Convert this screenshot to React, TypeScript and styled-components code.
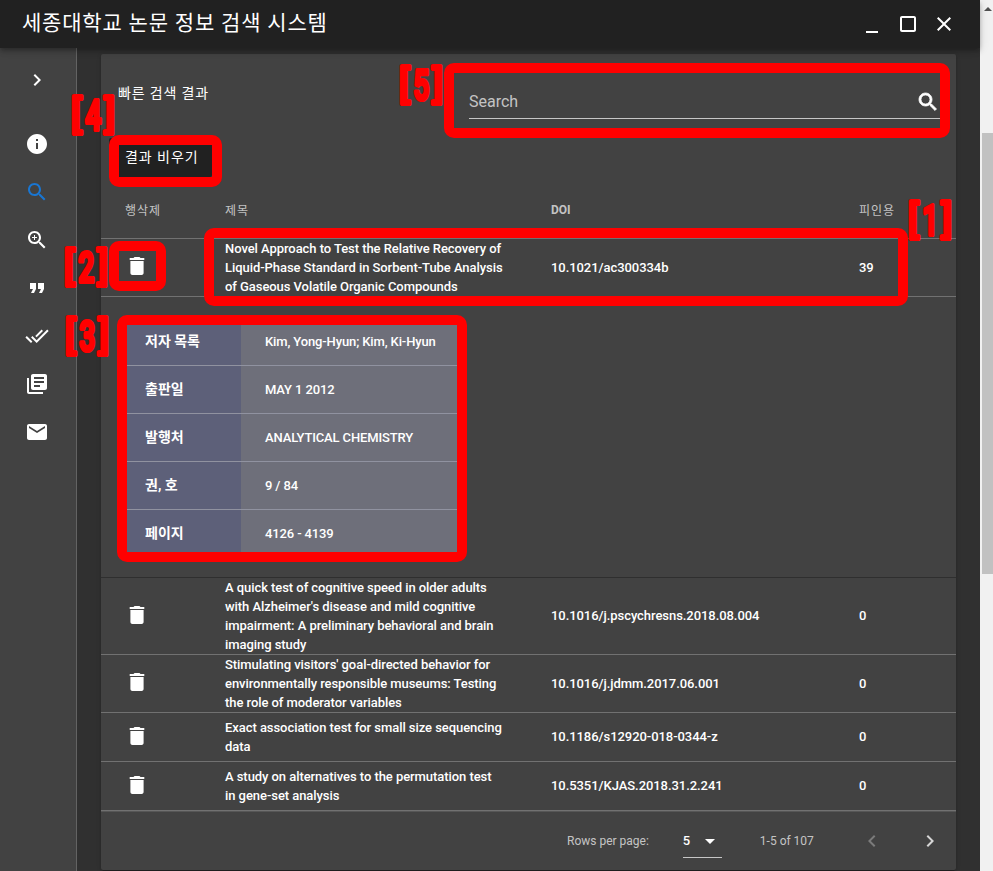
import React from "react";
import styled, { createGlobalStyle, css } from "styled-components";

const GlobalStyle = createGlobalStyle`
  *, *::before, *::after { box-sizing: border-box; }
  body {
    margin: 0;
    overflow: hidden;
    background: #303030;
    color: #fff;
    font-family: Roboto, "Noto Sans CJK KR", sans-serif;
  }
`;

const Screen = styled.div`
  position: relative;
  display: flex;
  width: 993px;
  height: 871px;
  overflow: hidden;
`;

const Window = styled.div`
  display: flex;
  flex-direction: column;
  width: 980px;
`;

const TitleBar = styled.header`
  display: flex;
  align-items: center;
  justify-content: space-between;
  flex: none;
  height: 48px;
  padding: 0 24px 0 22px;
  background: #212121;
  box-shadow: 0 2px 4px -1px rgba(0, 0, 0, 0.2), 0 4px 5px rgba(0, 0, 0, 0.14),
    0 1px 10px rgba(0, 0, 0, 0.12);
  z-index: 1;
`;

const AppTitle = styled.h1`
  margin: 0 0 1px;
  font-size: 21px;
  font-weight: 400;
  line-height: 1;
  letter-spacing: 0.8px;
  white-space: nowrap;
`;

const WindowButtons = styled.div`
  display: flex;
  gap: 12px;
`;

const Body = styled.div`
  display: flex;
  flex: 1;
  min-height: 0;
`;

const Sidebar = styled.nav`
  display: flex;
  flex-direction: column;
  flex: none;
  width: 77px;
  padding: 20px 0 0 25px;
  gap: 24px;
  background: #424242;
  border-right: 1px solid #636363;
`;

const NavItem = styled.a<{ $active?: boolean; $spaced?: boolean }>`
  display: flex;
  height: 24px;
  margin-bottom: ${(p) => (p.$spaced ? 16 : 0)}px;
  color: ${(p) => (p.$active ? "#1976d2" : "#fff")};
`;

const Content = styled.main`
  flex: 1;
  padding: 6px 24px 1px;
  background: #303030;
`;

const Card = styled.section`
  display: flex;
  flex-direction: column;
  height: 816px;
  background: #424242;
  border-radius: 2px;
  box-shadow: 0 3px 1px -2px rgba(0, 0, 0, 0.2), 0 2px 2px rgba(0, 0, 0, 0.14),
    0 1px 5px rgba(0, 0, 0, 0.12);
`;

const CardHead = styled.div`
  display: flex;
  justify-content: space-between;
  height: 84px;
  padding: 0 16px;
`;

const CardTitle = styled.div`
  padding: 29px 0 0 1px;
  font-size: 14px;
  line-height: 20px;
  letter-spacing: 0.85px;
`;

const SearchField = styled.label`
  display: flex;
  align-items: center;
  justify-content: space-between;
  width: 471px;
  height: 33px;
  margin-top: 32px;
  padding-bottom: 2px;
  border-bottom: 1px solid #c6c6c6;
  color: rgba(255, 255, 255, 0.7);
  font-size: 16px;
`;

const SearchIcon = styled.span`
  display: flex;
  margin-top: 2px;
  color: #fff;
  stroke: #fff;
  stroke-width: 0.8px;
`;

const ClearButton = styled.button`
  align-self: flex-start;
  height: 39px;
  margin-left: 8px;
  padding: 0 13px 0 16px;
  border: 0;
  border-radius: 2px;
  background: #212121;
  color: #fff;
  font: 400 14px/39px Roboto, "Noto Sans CJK KR", sans-serif;
  letter-spacing: 0.95px;
  white-space: nowrap;
`;

const columns = css`
  display: grid;
  grid-template-columns: 100px 326px 308px 1fr;
  align-items: center;
  padding-left: 24px;
`;

const TableHead = styled.div`
  ${columns}
  height: 62px;
  padding-top: 3px;
  border-bottom: 1px solid #717171;
  color: rgba(255, 255, 255, 0.7);
  font-size: 12px;
  font-weight: 400;
`;

const HeadCell = styled.span<{ $latin?: boolean }>`
  padding-top: ${(p) => (p.$latin ? 1 : 0)}px;
  font-weight: ${(p) => (p.$latin ? 700 : 400)};
  letter-spacing: ${(p) => (p.$latin ? 0 : 1)}px;
`;

const TableRow = styled.div<{ $height: number }>`
  ${columns}
  height: ${(p) => p.$height}px;
  border-bottom: 1px solid #717171;
  font-size: 13px;
  font-weight: 500;
  line-height: 19px;
  letter-spacing: -0.06px;
  white-space: pre;
`;

const ValueCell = styled.span<{ $lift: number }>`
  margin-bottom: ${(p) => p.$lift}px;
`;

const DeleteCell = styled.span`
  display: flex;
  height: 24px;
  margin-bottom: 3px;
`;

const Expansion = styled.div`
  height: 281px;
  padding: 21px 0 0 20px;
  border-bottom: 1px solid #2f2f2f;
`;

const DetailTable = styled.dl`
  width: 340px;
  margin: 0;
`;

const DetailRow = styled.div`
  display: grid;
  grid-template-columns: 120px 1fr;
  height: 48px;
  line-height: 47px;
  font-size: 13px;

  &:not(:last-child) {
    background: #9092a0;
  }
`;

const DetailLabel = styled.dt`
  height: 47px;
  padding-left: 24px;
  background: #5d6079;
  font-size: 14px;
  font-weight: 700;
  line-height: 46px;
`;

const DetailValue = styled.dd`
  height: 47px;
  margin: 0;
  padding-left: 24px;
  background: #6e6f7a;
  font-weight: 500;
  letter-spacing: -0.13px;
`;

const Footer = styled.footer`
  display: flex;
  align-items: center;
  flex: 1;
  padding: 0 14px 0 466px;
  border-top: 1px solid #565656;
  color: rgba(255, 255, 255, 0.7);
  font-size: 12px;
`;

const PageSize = styled.div`
  display: flex;
  align-items: center;
  justify-content: space-between;
  width: 39px;
  height: 34px;
  margin: 0 38px 0 34px;
  border-bottom: 1px solid #c6c6c6;
  color: #fff;
  font-size: 13px;
  font-weight: 500;
`;

const Pager = styled.div`
  display: flex;
  gap: 34px;
  margin-left: auto;
`;

const PageArrow = styled.span<{ $disabled?: boolean }>`
  display: flex;
  color: ${(p) => (p.$disabled ? "#7b7b7b" : "#d6d6d6")};
`;

const Scrollbar = styled.aside`
  display: flex;
  flex-direction: column;
  align-items: flex-end;
  width: 13px;
  padding-top: 7px;
  background: #f1f1f1;
`;

const ScrollUp = styled.div`
  width: 0;
  margin-right: 1px;
  border: 4px solid transparent;
  border-top-width: 0;
  border-bottom-color: #505050;
`;

const ScrollThumb = styled.div`
  width: 11px;
  height: 441px;
  margin-top: 122px;
  background: #c1c1c1;
`;

type Box = { x: number; y: number; w: number; h: number };

const Marker = styled.div<{ $box: Box }>`
  position: absolute;
  z-index: 2;
  left: ${(p) => p.$box.x}px;
  top: ${(p) => p.$box.y}px;
  width: ${(p) => p.$box.w}px;
  height: ${(p) => p.$box.h}px;
  border: 10px solid #f00;
  border-radius: 10px;
  pointer-events: none;
`;

const MarkerLabel = styled.svg<{ $x: number; $y: number }>`
  position: absolute;
  z-index: 3;
  left: ${(p) => p.$x}px;
  top: ${(p) => p.$y}px;
  width: 46px;
  height: 44px;
  overflow: visible;
  fill: #f00;
  stroke: #f00;
  stroke-width: 4.2px;
  stroke-linejoin: round;
  font-family: Roboto, sans-serif;
  font-weight: 400;
  text-anchor: middle;
`;

const MarkerDigit = styled.text`
  font-size: 42px;
  font-weight: 500;
`;

const MarkerBracket = styled.text`
  font-size: 38px;
`;

const Glyph = styled.svg`
  display: block;
  flex: none;
  width: 24px;
  height: 24px;
  fill: currentColor;
`;

const paths = {
  minimize: "M6 19h12v2H6z",
  maximize:
    "M18 4H6c-1.1 0-2 .9-2 2v12c0 1.1.9 2 2 2h12c1.1 0 2-.9 2-2V6c0-1.1-.9-2-2-2zm0 14H6V6h12v12z",
  close:
    "M19 6.41L17.59 5 12 10.59 6.41 5 5 6.41 10.59 12 5 17.59 6.41 19 12 13.41 17.59 19 19 17.59 13.41 12z",
  right: "M10 6L8.59 7.41 13.17 12l-4.58 4.59L10 18l6-6z",
  left: "M15.41 7.41L14 6l-6 6 6 6 1.41-1.41L10.83 12z",
  info: "M12 2C6.48 2 2 6.48 2 12s4.48 10 10 10 10-4.48 10-10S17.52 2 12 2zm1 15h-2v-6h2v6zm0-8h-2V7h2v2z",
  search:
    "M15.5 14h-.79l-.28-.27C15.41 12.59 16 11.11 16 9.5 16 5.91 13.09 3 9.5 3S3 5.91 3 9.5 5.91 16 9.5 16c1.61 0 3.09-.59 4.23-1.57l.27.28v.79l5 4.99L20.49 19l-4.99-5zm-6 0C7.01 14 5 11.99 5 9.5S7.01 5 9.5 5 14 7.01 14 9.5 11.99 14 9.5 14z",
  zoomIn:
    "M15.5 14h-.79l-.28-.27C15.41 12.59 16 11.11 16 9.5 16 5.91 13.09 3 9.5 3S3 5.91 3 9.5 5.91 16 9.5 16c1.61 0 3.09-.59 4.23-1.57l.27.28v.79l5 4.99L20.49 19l-4.99-5zm-6 0C7.01 14 5 11.99 5 9.5S7.01 5 9.5 5 14 7.01 14 9.5 11.99 14 9.5 14zm2.5-4h-2v2H9v-2H7V9h2V7h1v2h2v1z",
  quote: "M6 17h3l2-4V7H5v6h3zm8 0h3l2-4V7h-6v6h3z",
  doneAll:
    "M18 7l-1.41-1.41-6.34 6.34 1.41 1.41L18 7zm4.24-1.41L11.66 16.17 7.48 12l-1.41 1.41L11.66 19l12-12-1.42-1.41zM.41 13.41L6 19l1.41-1.41L1.83 12 .41 13.41z",
  library:
    "M4 6H2v14c0 1.1.9 2 2 2h14v-2H4V6zm16-4H8c-1.1 0-2 .9-2 2v12c0 1.1.9 2 2 2h12c1.1 0 2-.9 2-2V4c0-1.1-.9-2-2-2zm-1 9H9V9h10v2zm-4 4H9v-2h6v2zm4-8H9V5h10v2z",
  mail: "M20 4H4c-1.1 0-1.99.9-1.99 2L2 18c0 1.1.9 2 2 2h16c1.1 0 2-.9 2-2V6c0-1.1-.9-2-2-2zm0 4l-8 5-8-5V6l8 5 8-5v2z",
  trash:
    "M5.4 19c0 1.1.9 2 2 2h9.2c1.1 0 2-.9 2-2V7H5.4v12zM19.3 4h-3.8l-1-1h-5l-1 1H4.7v2h14.6V4z",
  dropdown: "M7 10l5 5 5-5z",
};

const Icon = ({ name }: { name: keyof typeof paths }) => (
  <Glyph viewBox="0 0 24 24">
    <path d={paths[name]} />
  </Glyph>
);

const navIcons: (keyof typeof paths)[] = [
  "right", "info", "search", "zoomIn", "quote", "doneAll", "library", "mail",
];

const papers = [
  {
    title:
      "Novel Approach to Test the Relative Recovery of\nLiquid-Phase Standard in Sorbent-Tube Analysis\nof Gaseous Volatile Organic Compounds",
    doi: "10.1021/ac300334b",
    cited: 39,
    height: 58,
    lift: 0,
  },
  {
    title:
      "A quick test of cognitive speed in older adults\nwith Alzheimer's disease and mild cognitive\nimpairment: A preliminary behavioral and brain\nimaging study",
    doi: "10.1016/j.pscychresns.2018.08.004",
    cited: 0,
    height: 77,
    lift: 2,
  },
  {
    title:
      "Stimulating visitors' goal-directed behavior for\nenvironmentally responsible museums: Testing\nthe role of moderator variables",
    doi: "10.1016/j.jdmm.2017.06.001",
    cited: 0,
    height: 58,
    lift: 0,
  },
  {
    title: "Exact association test for small size sequencing\ndata",
    doi: "10.1186/s12920-018-0344-z",
    cited: 0,
    height: 49,
    lift: 2,
  },
  {
    title: "A study on alternatives to the permutation test\nin gene-set analysis",
    doi: "10.5351/KJAS.2018.31.2.241",
    cited: 0,
    height: 49,
    lift: 2,
  },
];

const details = [
  ["저자 목록", "Kim, Yong-Hyun; Kim, Ki-Hyun"],
  ["출판일", "MAY 1 2012"],
  ["발행처", "ANALYTICAL CHEMISTRY"],
  ["권, 호", "9 / 84"],
  ["페이지", "4126 - 4139"],
];

const markers = [
  { id: 1, label: [907, 199], box: { x: 204, y: 228, w: 704, h: 78 } },
  { id: 2, label: [63, 246], box: { x: 109, y: 241, w: 57, h: 50 } },
  { id: 3, label: [64, 315], box: { x: 117, y: 315, w: 350, h: 247 } },
  { id: 4, label: [70, 94], box: { x: 109, y: 135, w: 113, h: 52 } },
  { id: 5, label: [398, 64], box: { x: 444, y: 63, w: 506, h: 75 } },
];

export default function App() {
  return (
    <Screen>
      <GlobalStyle />
      <Window>
        <TitleBar>
          <AppTitle>세종대학교 논문 정보 검색 시스템</AppTitle>
          <WindowButtons>
            <Icon name="minimize" />
            <Icon name="maximize" />
            <Icon name="close" />
          </WindowButtons>
        </TitleBar>
        <Body>
          <Sidebar>
            {navIcons.map((name) => (
              <NavItem key={name} $active={name === "search"} $spaced={name === "right"}>
                <Icon name={name} />
              </NavItem>
            ))}
          </Sidebar>
          <Content>
            <Card>
              <CardHead>
                <CardTitle>빠른 검색 결과</CardTitle>
                <SearchField>
                  Search
                  <SearchIcon>
                    <Icon name="search" />
                  </SearchIcon>
                </SearchField>
              </CardHead>
              <ClearButton>결과 비우기</ClearButton>
              <TableHead>
                <HeadCell>행삭제</HeadCell>
                <HeadCell>제목</HeadCell>
                <HeadCell $latin>DOI</HeadCell>
                <HeadCell>피인용</HeadCell>
              </TableHead>
              {papers.map((paper, i) => (
                <React.Fragment key={paper.doi}>
                  <TableRow $height={paper.height}>
                    <DeleteCell>
                      <Icon name="trash" />
                    </DeleteCell>
                    <span>{paper.title}</span>
                    <ValueCell $lift={paper.lift}>{paper.doi}</ValueCell>
                    <ValueCell $lift={paper.lift}>{paper.cited}</ValueCell>
                  </TableRow>
                  {i === 0 && (
                    <Expansion>
                      <DetailTable>
                        {details.map(([label, value]) => (
                          <DetailRow key={label}>
                            <DetailLabel>{label}</DetailLabel>
                            <DetailValue>{value}</DetailValue>
                          </DetailRow>
                        ))}
                      </DetailTable>
                    </Expansion>
                  )}
                </React.Fragment>
              ))}
              <Footer>
                Rows per page:
                <PageSize>
                  5
                  <Icon name="dropdown" />
                </PageSize>
                1-5 of 107
                <Pager>
                  <PageArrow $disabled>
                    <Icon name="left" />
                  </PageArrow>
                  <PageArrow>
                    <Icon name="right" />
                  </PageArrow>
                </Pager>
              </Footer>
            </Card>
          </Content>
        </Body>
      </Window>
      <Scrollbar>
        <ScrollUp />
        <ScrollThumb />
      </Scrollbar>
      {markers.map(({ id, label, box }) => (
        <React.Fragment key={id}>
          <Marker $box={box} />
          <MarkerLabel $x={label[0]} $y={label[1]} viewBox="0 0 46 44">
            <MarkerBracket transform="translate(6.2 34.3) scale(1.05 1)">[</MarkerBracket>
            <MarkerDigit transform="translate(23.2 36) scale(0.67 1)">{id}</MarkerDigit>
            <MarkerBracket transform="translate(39.8 34.3) scale(1.05 1)">]</MarkerBracket>
          </MarkerLabel>
        </React.Fragment>
      ))}
    </Screen>
  );
}
